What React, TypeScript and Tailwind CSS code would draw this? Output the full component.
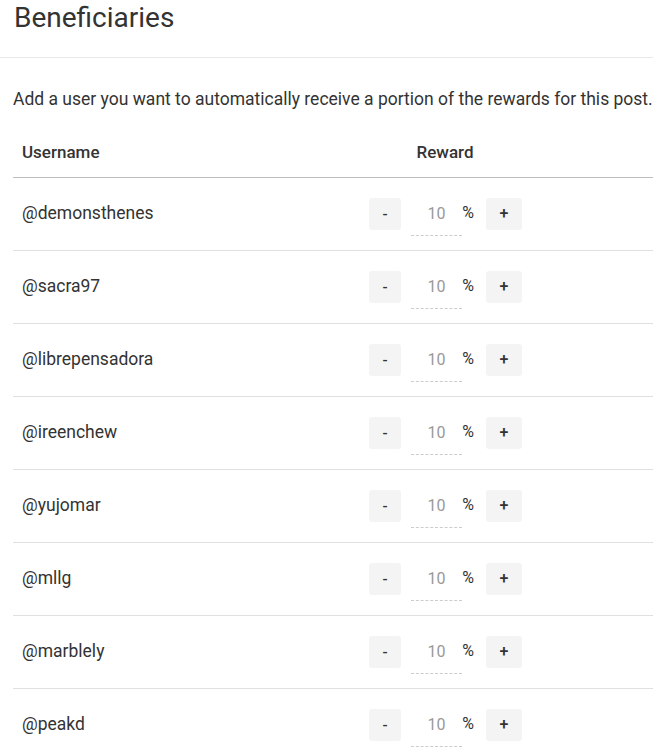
import React from "react";

const users = [
  "@demonsthenes",
  "@sacra97",
  "@librepensadora",
  "@ireenchew",
  "@yujomar",
  "@mllg",
  "@marblely",
  "@peakd",
];

export default function App() {
  return (
    <div className="w-[653px] h-[754px] overflow-hidden bg-white text-[#333]" style={{ fontFamily: "Roboto, 'Noto Sans', sans-serif" }}>
      <div className="h-[58px] border-b border-[#e8e8e8] pl-[14px] pt-[1px]">
        <h1 className="text-[28px] leading-[34px] text-[#333]">Beneficiaries</h1>
      </div>
      <p className="mt-[29px] pl-[13px] text-[17.5px] leading-[24px] text-[#333] whitespace-nowrap">
        Add a user you want to automatically receive a portion of the rewards for this post.
      </p>
      <div className="ml-[13px] mt-[16px] w-[660px]">
        <div className="grid grid-cols-[224px_1fr] h-[51px] items-center border-b border-[#bdbdbd] text-[17px] font-medium text-[#333]">
          <div className="pl-[9px] mt-[2px]">Username</div>
          <div className="text-center pr-[20px] mt-[2px]">Reward</div>
        </div>
        {users.map((u) => (
          <div key={u} className="grid grid-cols-[224px_1fr] h-[73px] items-center border-b border-[#e0e0e0]">
            <div className="pl-[9px] -mt-[2px] text-[17.5px] text-[#333]">{u}</div>
            <div className="flex pl-[132px]">
              <div className="flex items-start pt-[6px]">
                <button className="w-[32px] h-[32px] rounded-[3px] bg-[#f4f4f4] text-[#333] text-[15px] font-medium flex items-center justify-center">-</button>
                <div className="w-[51px] h-[38px] ml-[10px] border-b border-dashed border-[#ccc] text-center text-[16px] leading-[32px] text-[#999]">10</div>
                <span className="w-[12px] mr-[12px] text-center text-[16px] leading-[30px] text-[#333]">%</span>
                <button className="w-[36px] h-[32px] rounded-[3px] bg-[#f4f4f4] text-[#333] text-[16px] font-medium flex items-center justify-center">+</button>
              </div>
            </div>
          </div>
        ))}
      </div>
    </div>
  );
}
